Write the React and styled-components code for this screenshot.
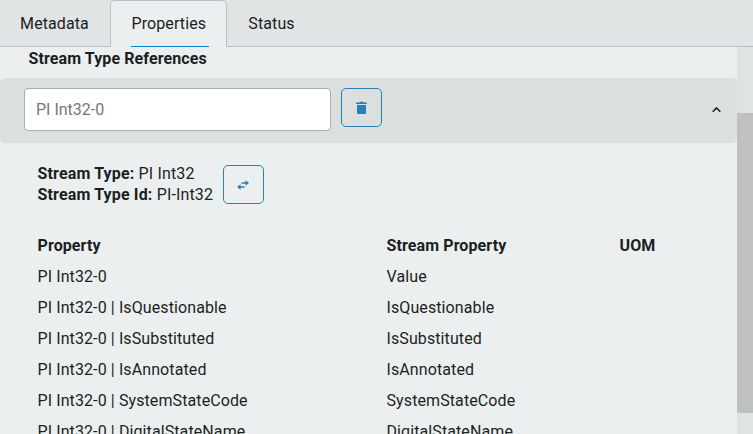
import React from 'react';
import styled, { createGlobalStyle } from 'styled-components';

const Global = createGlobalStyle`
  * { box-sizing: border-box; }
  body { margin: 0; overflow: hidden; background: #ebeff0; color: #1c1f21; font: 16px/21px Roboto, sans-serif; letter-spacing: 0.1px; }
`;
const Page = styled.div`display: flex; flex-direction: column; width: 753px; height: 434px; overflow: hidden;`;
const Tabs = styled.nav`display: flex; flex: none; height: 47px; background: #e0e4e5; box-shadow: inset 0 -1px #b9bfc4;`;
const Tab = styled.div`
  display: flex; justify-content: center; width: ${p => p.$w}px; padding-top: 13px; line-height: 21px;
  ${p => p.$active && 'background: #ebeff0; border: 1px solid #b9bfc4; border-bottom: 0; border-radius: 5px 5px 0 0; padding-top: 12px;'}
`;
const TabLabel = styled.span`
  margin-left: -1px;
  ${p => p.$active && 'border-bottom: 1px solid #0088ce; width: 78px; padding-left: 0.5px; white-space: nowrap; height: 34px; margin-left: 3px;'}
`;
const Body = styled.div`display: flex; flex: 1; min-height: 0;`;
const Content = styled.main`width: 737px; overflow: hidden;`;
const Heading = styled.h2`margin: 0; padding: 1px 0 0 28.5px; height: 31px; font-size: 16px; line-height: 21px; font-weight: 700;`;
const Reference = styled.section`display: flex; height: 65px; padding: 10px 14px 0 24px; background: #dbdfe0; border-radius: 5px;`;
const Field = styled.div`width: 307px; height: 43px; padding: 0 11px; border: 1px solid #a3b0b4; border-radius: 4px; background: #fff; color: #777; line-height: 42px; letter-spacing: 0; margin-right: 10px;`;
const IconButton = styled.button`display: flex; flex: none; align-items: center; justify-content: center; width: 41px; height: 39px; padding: 0; border: 1px solid #2980b9; border-radius: 5px; background: transparent; color: #2980b9;`;
const Chevron = styled.svg`margin: 14px 0 0 auto;`;
const Details = styled.section`display: flex; padding: 22px 0 0 37.5px; height: 87px;`;
const Facts = styled.div`width: 185.5px; white-space: nowrap; margin-top: -2px; letter-spacing: 0.15px;`;
const Row = styled.div`
  display: grid; grid-template-columns: 349px 233px 1fr; padding-left: 37.5px; height: 31px; line-height: 31px;
  font-weight: ${p => p.$head ? 700 : 400};
`;
const ScrollTrack = styled.div`width: 16px; background: #dfe3e4; padding-top: 66px;`;
const Thumb = styled.div`height: 300px; background: #bfc1c0;`;
const properties = ['Value', 'IsQuestionable', 'IsSubstituted', 'IsAnnotated', 'SystemStateCode', 'DigitalStateName'];

export default function App() {
  return (
    <Page><Global />
      <Tabs>
        <Tab $w={110}><TabLabel>Metadata</TabLabel></Tab>
        <Tab $w={117} $active><TabLabel $active>Properties</TabLabel></Tab>
        <Tab $w={90}><TabLabel>Status</TabLabel></Tab>
      </Tabs>
      <Body>
        <Content>
          <Heading>Stream Type References</Heading>
          <Reference>
            <Field>PI Int32-0</Field>
            <IconButton aria-label="Delete"><svg width="15" height="15" viewBox="0 0 15 15" fill="currentColor"><path d="M2 2.500h3L6 1.800h3l1 .7h2.700V4H2zM3 5h9v8q0 1-1 1H4q-1 0-1-1z" /></svg></IconButton>
            <Chevron width="12" height="16" viewBox="0 0 12 16" fill="none" stroke="#202426" strokeWidth="1.600"><path d="M1.700 9.700L5.500 5.900l3.800 3.800" /></Chevron>
          </Reference>
          <Details>
            <Facts><div><b>Stream Type:</b> PI Int32</div><div><b>Stream Type Id:</b> PI-Int32</div></Facts>
            <IconButton aria-label="Swap"><svg width="15" height="15" viewBox="0 0 15 15" fill="currentColor"><path d="M5.500 5.200h4V3.300L13 6l-3.500 2.700V6.800h-4zM8.500 9.200h-4V7.300L1 10l3.500 2.700v-1.900h4z" /></svg></IconButton>
          </Details>
          <Row $head><span>Property</span><span>Stream Property</span><span>UOM</span></Row>
          {properties.map((p, i) => <Row key={p}><span>{i ? `PI Int32-0 | ${p}` : 'PI Int32-0'}</span><span>{p}</span></Row>)}
        </Content>
        <ScrollTrack><Thumb /></ScrollTrack>
      </Body>
    </Page>
  );
}
